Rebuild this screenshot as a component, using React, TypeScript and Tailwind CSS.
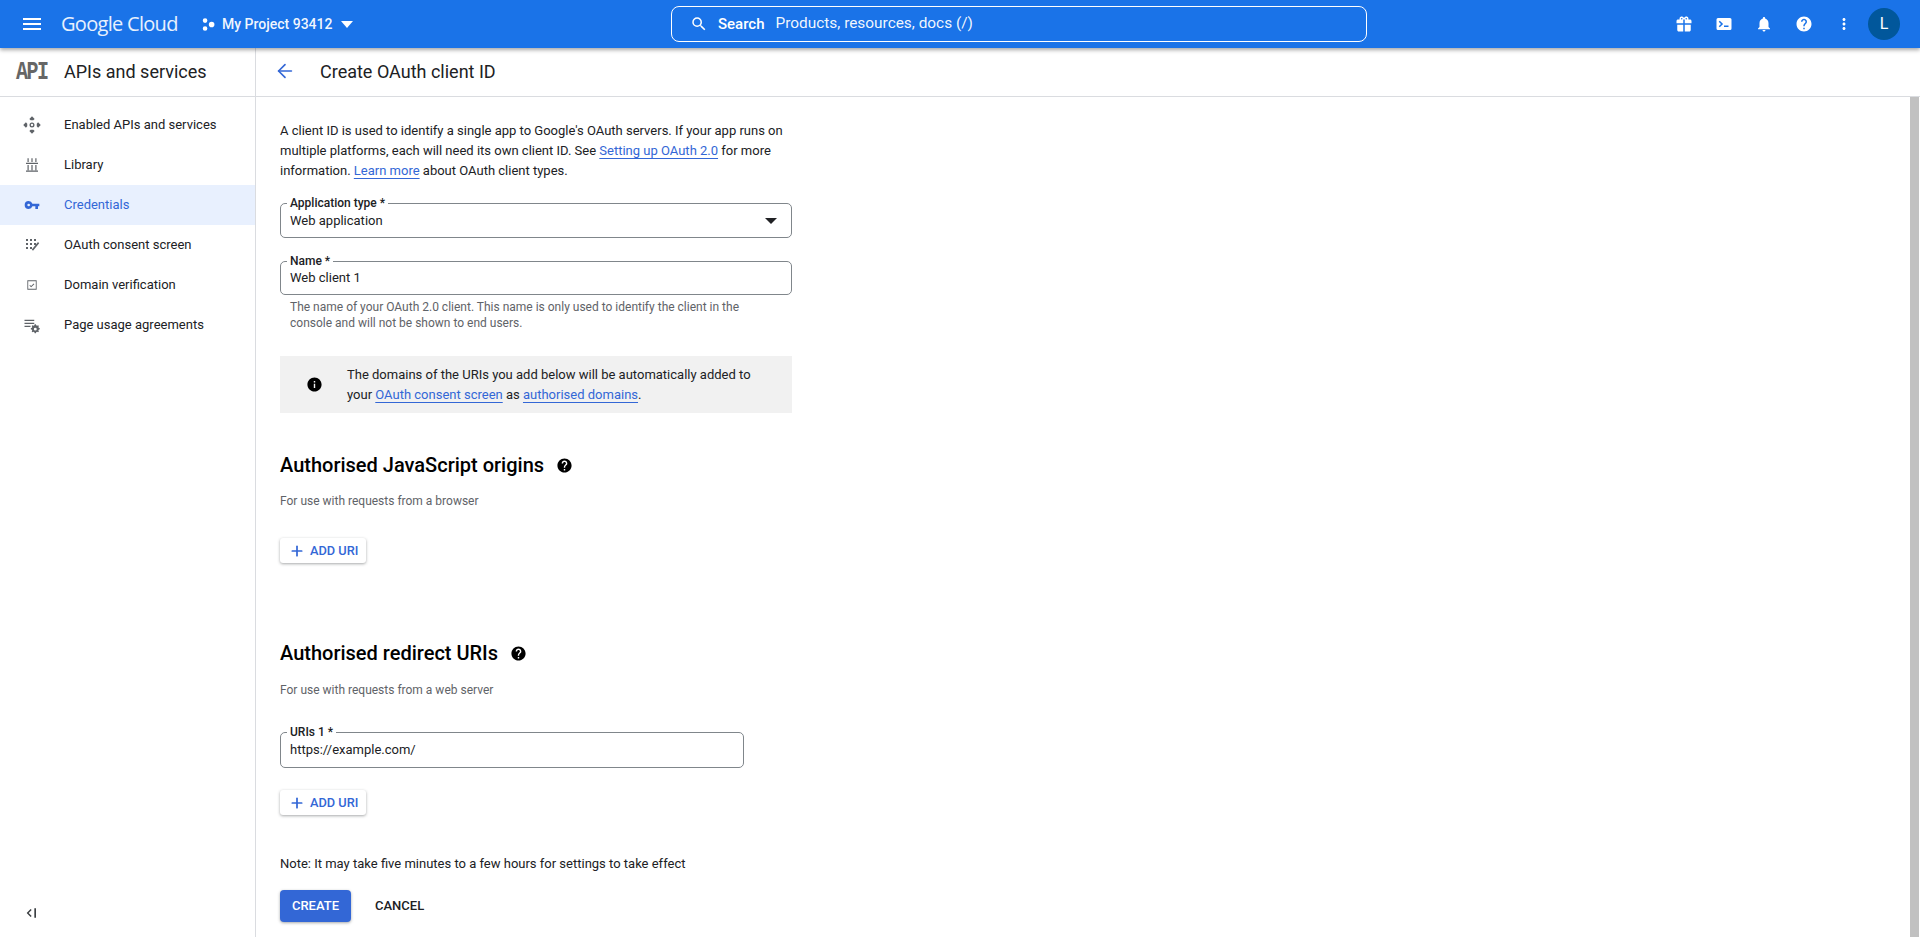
import { ArrowLeft, Plus } from 'lucide-react';
import type { ReactNode } from 'react';

function Icon({ d, size = 24, className = '' }: { d: string; size?: number; className?: string }) {
  return (
    <svg width={size} height={size} viewBox="0 0 24 24" fill="currentColor" className={className}>
      <path d={d} />
    </svg>
  );
}

const paths = {
  menu: 'M3 18h18v-2H3v2zm0-5h18v-2H3v2zm0-7v2h18V6H3z',
  search: 'M15.5 14h-.79l-.28-.27A6.47 6.47 0 0 0 16 9.5 6.5 6.5 0 1 0 9.5 16c1.61 0 3.09-.59 4.23-1.57l.27.28v.79l5 4.99L20.49 19l-4.99-5zm-6 0C7.01 14 5 11.99 5 9.5S7.01 5 9.5 5 14 7.01 14 9.5 11.99 14 9.5 14z',
  gift: 'M20 6h-2.18c.11-.31.18-.65.18-1a3 3 0 0 0-5.5-1.65l-.5.67-.5-.68A3 3 0 0 0 6 5c0 .35.07.69.18 1H4c-1.11 0-2 .89-2 2v3h9V6h2v5h9V8c0-1.11-.89-2-2-2zM9 6a1 1 0 1 1 0-2 1 1 0 0 1 0 2zm6 0a1 1 0 1 1 0-2 1 1 0 0 1 0 2zM3 13v7c0 1.11.89 2 2 2h6v-9H3zm10 0v9h6c1.11 0 2-.89 2-2v-7h-8z',
  terminal: 'M20 4H4a2 2 0 0 0-2 2v12a2 2 0 0 0 2 2h16a2 2 0 0 0 2-2V6a2 2 0 0 0-2-2zM6.4 16.4 5 15l3-3-3-3 1.4-1.4L10.8 12l-4.4 4.4zM18 16h-6v-2h6v2z',
  bell: 'M12 22c1.1 0 2-.9 2-2h-4c0 1.1.9 2 2 2zm6-6v-5c0-3.07-1.63-5.64-4.5-6.32V4c0-.83-.67-1.5-1.5-1.5s-1.5.67-1.5 1.5v.68C7.64 5.36 6 7.92 6 11v5l-2 2v1h16v-1l-2-2z',
  help: 'M12 2C6.48 2 2 6.48 2 12s4.48 10 10 10 10-4.48 10-10S17.52 2 12 2zm1 17h-2v-2h2v2zm2.07-7.75-.9.92C13.45 12.9 13 13.5 13 15h-2v-.5c0-1.1.45-2.1 1.17-2.83l1.24-1.26c.37-.36.59-.86.59-1.41 0-1.1-.9-2-2-2s-2 .9-2 2H8c0-2.21 1.79-4 4-4s4 1.79 4 4c0 .88-.36 1.68-.93 2.25z',
  dots: 'M12 8c1.1 0 2-.9 2-2s-.9-2-2-2-2 .9-2 2 .9 2 2 2zm0 2c-1.1 0-2 .9-2 2s.9 2 2 2 2-.9 2-2-.9-2-2-2zm0 6c-1.1 0-2 .9-2 2s.9 2 2 2 2-.9 2-2-.9-2-2-2z',
  info: 'M12 2C6.48 2 2 6.48 2 12s4.48 10 10 10 10-4.48 10-10S17.52 2 12 2zm1 15h-2v-6h2v6zm0-8h-2V7h2v2z',
  key: 'M12.65 10A6 6 0 0 0 7 6a6 6 0 0 0 0 12 6 6 0 0 0 5.65-4H17v4h4v-4h2v-4H12.65zM7 14a2 2 0 1 1 0-4 2 2 0 0 1 0 4z',
  library: 'M6 3h1.6v5H6zM11.2 3h1.6v5h-1.6zM16.4 3H18v5h-1.6zM4 9h16v1.6H4zM6 12h1.6v7H6zM11.2 12h1.6v7h-1.6zM16.4 12H18v7h-1.6zM4 19.4h16V21H4z',
  consent: 'M3 3h3v3H3zM9 3h3v3H9zM15 3h3v3h-3zM3 9h3v3H3zM9 9h3v3H9zM15 9h3v3h-3zM3 15h3v3H3zM9 15h3v3H9zM21 7.5l1.8 1.8-9.3 11.2-1.8-1.8z',
  verify: 'M20 4H4v16h16V4zm-1.5 14.5h-13v-13h13v13zM10.5 16l-3-3 1.1-1.1 1.9 1.9 4.4-4.4 1.1 1.1z',
  enabled: 'M12 1.5l3.2 3.2-1.6 1.6H10.4L8.8 4.7zM12 22.5l-3.2-3.2 1.6-1.6h3.2l1.6 1.6zM1.5 12l3.2-3.2 1.6 1.6v3.2l-1.6 1.6zM22.5 12l-3.2 3.2-1.6-1.6v-3.2l1.6-1.6zM12 9a3 3 0 1 1 0 6 3 3 0 0 1 0-6zm0 1.6a1.4 1.4 0 1 0 0 2.8 1.4 1.4 0 0 0 0-2.8z',
  usage: 'M2 5h13v1.8H2zM2 9h13v1.8H2zM2 13h8v1.8H2zM17.2 11l.4 1.4 1.2.5 1.3-.7 1.1 1.1-.7 1.3.5 1.2 1.4.4v1.6l-1.4.4-.5 1.2.7 1.3-1.1 1.1-1.3-.7-1.2.5-.4 1.4h-1.6l-.4-1.4-1.2-.5-1.3.7-1.1-1.1.7-1.3-.5-1.2-1.4-.4v-1.6l1.4-.4.5-1.2-.7-1.3 1.1-1.1 1.3.7 1.2-.5.4-1.4zm-.8 4.6a1.9 1.9 0 1 0 0 3.8 1.9 1.9 0 0 0 0-3.8z',
  collapse: 'M17 5h2.5v14H17zM13 7.4 11.4 6 5.5 12l5.9 6 1.6-1.4L8.5 12z',
  project: 'M6.5 2a3.7 3.7 0 1 1 0 7.4 3.7 3.7 0 0 1 0-7.4zM6.5 14.6a3.7 3.7 0 1 1 0 7.4 3.7 3.7 0 0 1 0-7.4zM17 7.5a4.5 4.5 0 1 1 0 9 4.5 4.5 0 0 1 0-9z',
};

const navItems = [
  { label: 'Enabled APIs and services', icon: paths.enabled, size: 20 },
  { label: 'Library', icon: paths.library, size: 18 },
  { label: 'Credentials', icon: paths.key, size: 16, active: true },
  { label: 'OAuth consent screen', icon: paths.consent, size: 16 },
  { label: 'Domain verification', icon: paths.verify, size: 14 },
  { label: 'Page usage agreements', icon: paths.usage, size: 18 },
];

function A({ children }: { children: ReactNode }) {
  return <a className="text-[#3367d6] underline decoration-[#3367d6] underline-offset-[3px]">{children}</a>;
}

function Outlined({ label, width, height, children }: { label: string; width: string; height: string; children: ReactNode }) {
  return (
    <div className={`relative flex items-center border border-[#80868b] rounded-[5px] pl-[9px] pr-3 text-[13px] text-[#202124] ${width} ${height}`}>
      <span className="absolute left-[6px] -top-[7px] bg-white px-[3px] text-[12px] leading-[12px] font-medium text-[#202124]">{label}</span>
      {children}
    </div>
  );
}

function AddUri() {
  return (
    <button className="flex items-center w-[86px] h-[25px] rounded-[3px] bg-white pl-[9px] gap-[5px] text-[12.8px] font-medium text-[#3367d6] shadow-[0_1px_3px_rgba(60,64,67,0.45)]">
      <Plus size={16} strokeWidth={2.6} />
      ADD URI
    </button>
  );
}

export default function App() {
  return (
    <div className="flex flex-col h-[937px] overflow-hidden bg-white font-['Roboto',sans-serif] text-[#202124]">
      <header className="relative z-10 flex items-center h-[48px] shrink-0 bg-[#1a73e8] text-white shadow-[0_2px_4px_rgba(0,0,0,0.35)]">
        <div className="flex items-center w-[671px] shrink-0">
          <Icon d={paths.menu} size={24} className="ml-[20px]" />
          <span className="ml-[17px] w-[119px] whitespace-nowrap text-[20px] leading-[24px] tracking-[-0.7px] font-['Open_Sans',sans-serif] text-white/90">Google Cloud</span>
          <Icon d={paths.project} size={15} className="ml-[21px]" />
          <span className="ml-[6px] text-[14px] font-medium text-white/95">My Project 93412</span>
          <svg width="14" height="7" viewBox="0 0 14 7" className="ml-[8px]" fill="currentColor"><path d="M1 0h12L7 7z" /></svg>
        </div>
        <div className="flex items-center w-[696px] h-[36px] shrink-0 border border-white rounded-[8px] pl-[18px] text-[15px]">
          <Icon d={paths.search} size={18} />
          <span className="ml-[10px] font-medium">Search</span>
          <span className="ml-[11px] text-[15.4px] text-white/95">Products, resources, docs (/)</span>
        </div>
        <div className="flex items-center ml-auto pr-[20px]">
          <Icon d={paths.gift} size={18} className="mr-[22px]" />
          <Icon d={paths.terminal} size={18} className="mr-[22px]" />
          <Icon d={paths.bell} size={18} className="mr-[22px]" />
          <Icon d={paths.help} size={18} className="mr-[22px]" />
          <Icon d={paths.dots} size={18} className="mr-[15px]" />
          <div className="flex items-center justify-center w-[32px] h-[32px] rounded-full bg-[#01579b] text-[16px]">L</div>
        </div>
      </header>

      <div className="flex flex-1 min-h-0">
        <aside className="flex flex-col w-[256px] shrink-0 border-r border-[#dadce0]">
          <div className="flex items-center h-[49px] shrink-0 border-b border-[#dadce0] pl-[16px] pb-[2px]">
            <span className="w-[48px] text-[20px] font-bold font-['Liberation_Mono',monospace] tracking-[-1.5px] text-[#666666] inline-block scale-y-125 translate-y-[2px]">API</span>
            <span className="text-[18px] text-[#202124]">APIs and services</span>
          </div>
          <nav className="flex flex-col pt-[8px]">
            {navItems.map((item) => (
              <div key={item.label} className={`flex items-center h-[40px] ${item.active ? 'bg-[#e8f0fe] text-[#3367d6]' : 'text-[#202124]'}`}>
                <span className={`flex items-center justify-center w-[64px] ${item.active ? 'text-[#3367d6]' : 'text-[#5f6368]'}`}>
                  <Icon d={item.icon} size={item.size} />
                </span>
                <span className="text-[13px]">{item.label}</span>
              </div>
            ))}
          </nav>
          <div className="mt-auto h-[49px] flex items-center pl-[23px] text-[#3c4043]">
            <Icon d={paths.collapse} size={16} />
          </div>
        </aside>

        <div className="flex flex-col flex-1 min-w-0">
          <div className="flex items-center h-[49px] shrink-0 border-b border-[#dadce0] pl-[18px] pb-[2px]">
            <ArrowLeft size={22} strokeWidth={1.8} className="text-[#3367d6]" />
            <h1 className="ml-[24px] text-[18px] text-[#202124]">Create OAuth client ID</h1>
          </div>

          <div className="flex flex-1 min-h-0">
            <main className="flex-1 pl-[24px] pt-[24px]">
              <p className="w-[520px] text-[13px] leading-[20px]">
                A client ID is used to identify a single app to Google's OAuth servers. If your app runs on multiple platforms, each will need its own client ID. See <A>Setting up OAuth 2.0</A> for more information. <A>Learn more</A> about OAuth client types.
              </p>

              <div className="mt-[22px]">
                <Outlined label="Application type *" width="w-[512px]" height="h-[35px]">
                  Web application
                  <svg width="12" height="6" viewBox="0 0 12 6" className="ml-auto mr-[2px]" fill="#202124"><path d="M0 0h12L6 6z" /></svg>
                </Outlined>
              </div>
              <div className="mt-[23px]">
                <Outlined label="Name *" width="w-[512px]" height="h-[34px]">Web client 1</Outlined>
              </div>
              <p className="w-[480px] pl-[10px] mt-[4px] text-[12px] leading-[16px] text-[#5f6368]">
                The name of your OAuth 2.0 client. This name is only used to identify the client in the console and will not be shown to end users.
              </p>

              <div className="flex items-center w-[512px] h-[57px] mt-[25px] bg-[#f1f1f1] text-[13px] leading-[20px]">
                <span className="flex justify-center w-[67px] pl-[2px] pr-[1px]"><Icon d={paths.info} size={17} className="text-black" /></span>
                <p className="w-[415px]">
                  The domains of the URIs you add below will be automatically added to your <A>OAuth consent screen</A> as <A>authorised domains</A>.
                </p>
              </div>

              <div className="flex items-center mt-[37px] h-[30px]">
                <h2 className="text-[20px] font-medium text-black">Authorised JavaScript origins</h2>
                <Icon d={paths.help} size={17} className="ml-[12px] text-black" />
              </div>
              <p className="mt-[13px] text-[12px] leading-[16px] text-[#5f6368]">For use with requests from a browser</p>
              <div className="mt-[29px]"><AddUri /></div>

              <div className="flex items-center mt-[75px] h-[30px]">
                <h2 className="text-[20px] font-medium text-black">Authorised redirect URIs</h2>
                <Icon d={paths.help} size={17} className="ml-[12px] text-black" />
              </div>
              <p className="mt-[14px] text-[12px] leading-[16px] text-[#5f6368]">For use with requests from a web server</p>

              <div className="mt-[34px]">
                <Outlined label="URIs 1 *" width="w-[464px]" height="h-[36px]">https://example.com/</Outlined>
              </div>
              <div className="mt-[22px]"><AddUri /></div>

              <p className="mt-[39px] text-[13px] leading-[20px]">Note: It may take five minutes to a few hours for settings to take effect</p>

              <div className="flex items-center mt-[16px]">
                <button className="w-[71px] h-[32px] rounded-[4px] bg-[#3367d6] text-[13px] font-medium text-white shadow-[0_1px_3px_rgba(60,64,67,0.45)]">CREATE</button>
                <button className="ml-[24px] text-[13px] font-medium text-[#202124]">CANCEL</button>
              </div>
            </main>
            <div className="w-[9px] shrink-0 mr-px bg-[#c1c1c1]" />
          </div>
        </div>
      </div>
    </div>
  );
}
